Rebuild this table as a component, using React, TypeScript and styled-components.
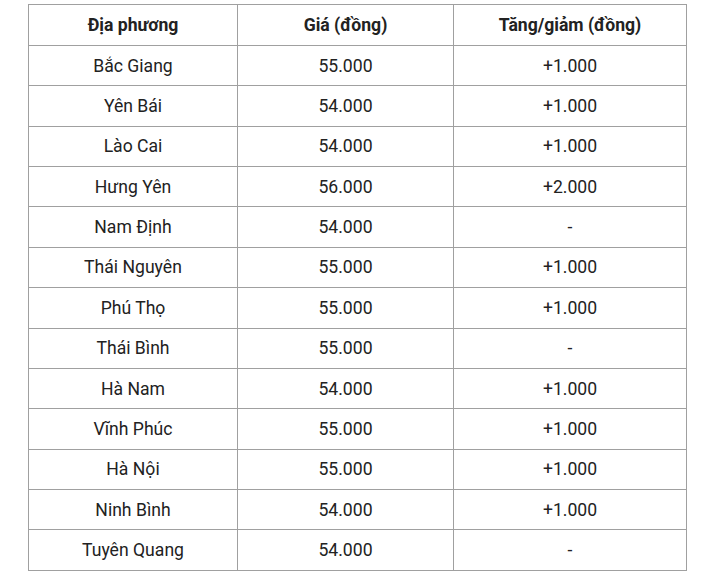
import React from 'react';
import styled, { createGlobalStyle } from 'styled-components';

const GlobalStyle = createGlobalStyle`
  body {
    margin: 0;
    background: #ffffff;
    font-family: Roboto, "Liberation Sans", Arial, sans-serif;
  }
`;

const Wrapper = styled.div`
  padding: 4px 0 0 28px;
`;

const PriceTable = styled.table`
  width: 655px;
  border-collapse: collapse;
  table-layout: fixed;
  color: #222222;
  font-size: 17.6px;
`;

const HeadCell = styled.th<{ w: number }>`
  width: ${props => props.w}px;
  height: 40px;
  padding: 0;
  border: 1px solid #a0a0a0;
  font-weight: 700;
  text-align: center;
  vertical-align: middle;
`;

const Row = styled.tr`
  height: 40.36px;
`;

const Cell = styled.td`
  padding: 0;
  border: 1px solid #a0a0a0;
  text-align: center;
  vertical-align: middle;
`;

const rows = [
  ['Bắc Giang', '55.000', '+1.000'],
  ['Yên Bái', '54.000', '+1.000'],
  ['Lào Cai', '54.000', '+1.000'],
  ['Hưng Yên', '56.000', '+2.000'],
  ['Nam Định', '54.000', '-'],
  ['Thái Nguyên', '55.000', '+1.000'],
  ['Phú Thọ', '55.000', '+1.000'],
  ['Thái Bình', '55.000', '-'],
  ['Hà Nam', '54.000', '+1.000'],
  ['Vĩnh Phúc', '55.000', '+1.000'],
  ['Hà Nội', '55.000', '+1.000'],
  ['Ninh Bình', '54.000', '+1.000'],
  ['Tuyên Quang', '54.000', '-'],
];

const App: React.FC = () => {
  return (
    <>
      <GlobalStyle />
      <Wrapper>
        <PriceTable>
          <thead>
            <tr>
              <HeadCell w={208}>Địa phương</HeadCell>
              <HeadCell w={215}>Giá (đồng)</HeadCell>
              <HeadCell w={232}>Tăng/giảm (đồng)</HeadCell>
            </tr>
          </thead>
          <tbody>
            {rows.map((r, i) => (
              <Row key={i}>
                <Cell>{r[0]}</Cell>
                <Cell>{r[1]}</Cell>
                <Cell>{r[2]}</Cell>
              </Row>
            ))}
          </tbody>
        </PriceTable>
      </Wrapper>
    </>
  );
};

export default App;
